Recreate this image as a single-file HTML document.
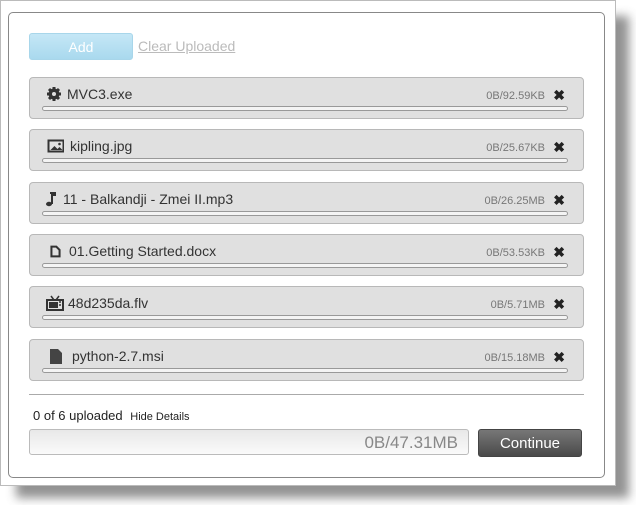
<!DOCTYPE html>
<html><head><style>
*{box-sizing:border-box;margin:0;padding:0}
body{width:636px;height:505px;background:#fff;position:relative;overflow:hidden;font-family:"Liberation Sans",sans-serif;}
.shadow{position:absolute;left:16px;top:16px;width:613px;height:482px;background:#777;filter:blur(5px);opacity:.8}
.frame{position:absolute;left:0;top:0;width:616px;height:486px;background:#fff;border:1px solid #bbb;}
.inner{position:absolute;left:8px;top:12px;width:597px;height:466px;border:1px solid #888;border-radius:5px;background:#fff}
.add{position:absolute;left:29px;top:33px;width:104px;height:27px;border-radius:3px;background:linear-gradient(#c5e7f6,#a9d9ee);border:1px solid #a8d6ea;color:#fff;font-size:14px;text-align:center;line-height:27px}
.clear{position:absolute;left:138px;top:38px;color:#bbb;font-size:14px;text-decoration:underline}
.item{position:absolute;left:29px;width:555px;height:42px;background:#e0e0e0;border:1px solid #b8b8b8;border-radius:4px}
.name{position:absolute;left:38px;top:8px;font-size:14px;color:#333}
.ic{position:absolute;left:16px;top:8px;width:16px;height:16px}
.size{position:absolute;right:38px;top:12px;font-size:11px;color:#777}
.x{position:absolute;right:18px;top:9px;font-size:14px;font-weight:bold;color:#222}
.bar{position:absolute;left:12px;top:28px;width:526px;height:5px;border:1px solid #999;border-radius:3px;background:#f4f4f4}
.sep{position:absolute;left:29px;top:394px;width:555px;height:1px;background:#aaa}
.status{position:absolute;left:33px;top:408px;font-size:13px;color:#222}
.status span{font-size:11px;margin-left:4px}
.total{position:absolute;left:29px;top:429px;width:440px;height:26px;border:1px solid #bbb;border-radius:3px;background:linear-gradient(#e8e8e8,#fafafa);text-align:right;padding-right:10px;font-size:17px;color:#888;line-height:25px}
.cont{position:absolute;left:478px;top:429px;width:104px;height:28px;border-radius:3px;background:linear-gradient(#777,#4a4a4a);border:1px solid #444;color:#fff;font-size:15px;text-align:center;line-height:27px}
</style></head><body>
<div class="shadow"></div>
<div class="frame"></div>
<div class="inner"></div>
<div class="add">Add</div>
<div class="clear">Clear Uploaded</div>

<div class="item" style="top:77px"><svg class="ic" viewBox="0 0 16 16"><circle cx="8" cy="8" r="5.5" fill="#333"/><g stroke="#333" stroke-width="3"><path d="M8 1v14M1 8h14M3 3l10 10M13 3L3 13"/></g><circle cx="8" cy="8" r="2" fill="#e0e0e0"/></svg><div class="name" style="left:37px">MVC3.exe</div><div class="size">0B/92.59KB</div><div class="x">✖</div><div class="bar"></div></div>

<div class="item" style="top:129px"><svg class="ic" viewBox="0 0 16 16" style="left:17px;width:17px"><rect x="1" y="2.5" width="15" height="11" fill="none" stroke="#333" stroke-width="2"/><path d="M3 12l4-4 3 3 2-2 3 3z" fill="#333"/><circle cx="12" cy="6" r="1.3" fill="#333"/></svg><div class="name" style="left:40px">kipling.jpg</div><div class="size">0B/25.67KB</div><div class="x">✖</div><div class="bar"></div></div>

<div class="item" style="top:182px"><svg class="ic" viewBox="0 0 16 16" style="left:14px"><path d="M6 2h5v2H8v9" stroke="#333" stroke-width="2" fill="none"/><ellipse cx="5" cy="13" rx="3" ry="2.2" fill="#333"/></svg><div class="name" style="left:33px">11 - Balkandji - Zmei II.mp3</div><div class="size">0B/26.25MB</div><div class="x">✖</div><div class="bar"></div></div>

<div class="item" style="top:234px"><svg class="ic" viewBox="0 0 16 16" style="left:19px;width:13px;height:13px;top:10px"><path d="M3 2h6l4 4v8H3z" fill="none" stroke="#333" stroke-width="2.5"/></svg><div class="name" style="left:39px">01.Getting Started.docx</div><div class="size">0B/53.53KB</div><div class="x">✖</div><div class="bar"></div></div>

<div class="item" style="top:286px"><svg class="ic" viewBox="0 0 18 16" style="left:16px;width:18px"><rect x="1" y="5" width="16" height="10" fill="none" stroke="#333" stroke-width="2"/><rect x="3" y="7" width="9" height="6" fill="#333"/><path d="M13 7h2M13 10h2M8 5l-3-4M10 5l3-4" stroke="#333" stroke-width="1.5"/></svg><div class="name" style="left:38px">48d235da.flv</div><div class="size">0B/5.71MB</div><div class="x">✖</div><div class="bar"></div></div>

<div class="item" style="top:339px"><svg class="ic" viewBox="0 0 16 16" style="left:18px"><path d="M2 1h8l4 4v11H2z" fill="#444"/></svg><div class="name" style="left:42px">python-2.7.msi</div><div class="size">0B/15.18MB</div><div class="x">✖</div><div class="bar"></div></div>

<div class="sep"></div>
<div class="status">0 of 6 uploaded <span>Hide Details</span></div>
<div class="total">0B/47.31MB</div>
<div class="cont">Continue</div>
</body></html>
